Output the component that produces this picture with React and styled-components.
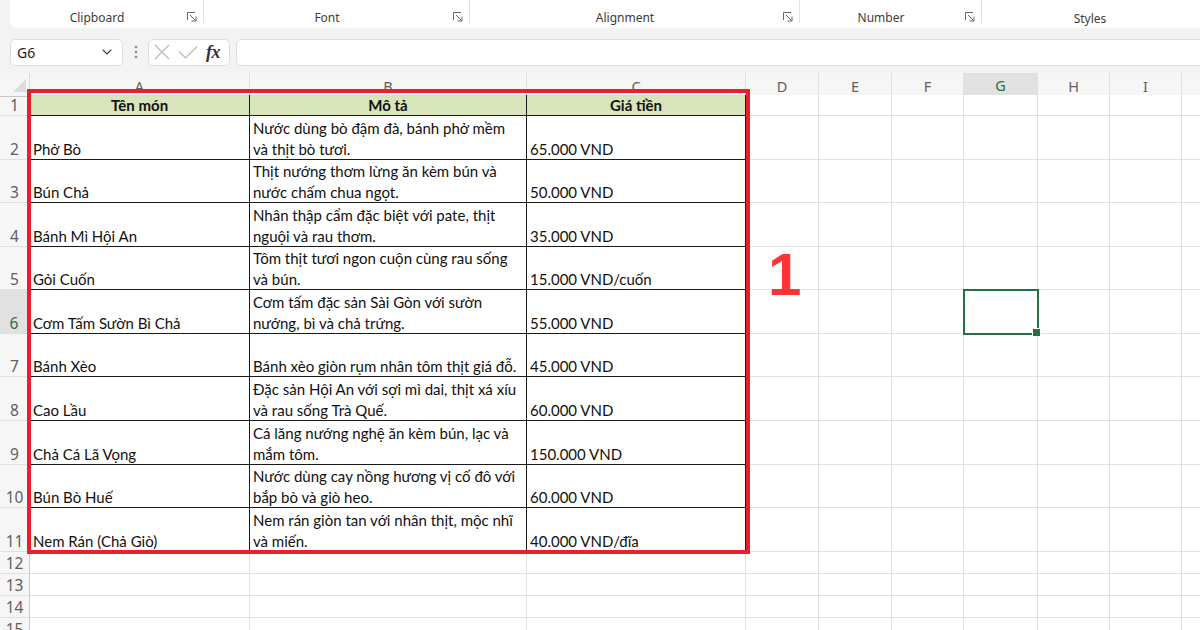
import styled, { createGlobalStyle } from "styled-components";
import { ChevronDown } from "lucide-react";

const GlobalStyle = createGlobalStyle`
  html, body {
    margin: 0;
    padding: 0;
    background: #f3f3f3;
    overflow: hidden;
  }
  * { box-sizing: border-box; }
`;

const COLUMNS = [
  ["A", 220],
  ["B", 277],
  ["C", 219],
  ["D", 73],
  ["E", 73],
  ["F", 72],
  ["G", 74],
  ["H", 72],
  ["I", 72],
  ["J", 80],
];

const TEMPLATE = "30px " + COLUMNS.map(([, w]) => w + "px").join(" ");

const DISHES = [
  ["Phở Bò", ["Nước dùng bò đậm đà, bánh phở mềm", "và thịt bò tươi."], "65.000 VND", 44],
  ["Bún Chả", ["Thịt nướng thơm lừng ăn kèm bún và", "nước chấm chua ngọt."], "50.000 VND", 43],
  ["Bánh Mì Hội An", ["Nhân thập cẩm đặc biệt với pate, thịt", "nguội và rau thơm."], "35.000 VND", 44],
  ["Gỏi Cuốn", ["Tôm thịt tươi ngon cuộn cùng rau sống", "và bún."], "15.000 VND/cuốn", 43],
  ["Cơm Tấm Sườn Bì Chả", ["Cơm tấm đặc sản Sài Gòn với sườn", "nướng, bì và chả trứng."], "55.000 VND", 44],
  ["Bánh Xèo", ["Bánh xèo giòn rụm nhân tôm thịt giá đỗ."], "45.000 VND", 43],
  ["Cao Lầu", ["Đặc sản Hội An với sợi mì dai, thịt xá xíu", "và rau sống Trà Quế."], "60.000 VND", 44],
  ["Chả Cá Lã Vọng", ["Cá lăng nướng nghệ ăn kèm bún, lạc và", "mắm tôm."], "150.000 VND", 44],
  ["Bún Bò Huế", ["Nước dùng cay nồng hương vị cố đô với", "bắp bò và giò heo."], "60.000 VND", 43],
  ["Nem Rán (Chả Giò)", ["Nem rán giòn tan với nhân thịt, mộc nhĩ", "và miến."], "40.000 VND/đĩa", 44],
];

const GROUPS = [
  ["Clipboard", 194, true],
  ["Font", 266, true],
  ["Alignment", 330, true],
  ["Number", 182, true],
  ["Styles", 216, false],
];

function Launcher() {
  return (
    <svg width="10" height="10" viewBox="0 0 10 10" fill="none" stroke="#666" strokeWidth="1">
      <path d="M0.5 8V0.5H8" />
      <path d="M3 3l5.5 5.5" />
      <path d="M9 4.5V9H4.5" />
    </svg>
  );
}

function Dots() {
  return (
    <svg width="4" height="14" viewBox="0 0 4 14" fill="#8a8a8a">
      <circle cx="2" cy="2" r="1.3" />
      <circle cx="2" cy="7" r="1.3" />
      <circle cx="2" cy="12" r="1.3" />
    </svg>
  );
}

function CancelIcon() {
  return (
    <svg width="16" height="16" viewBox="0 0 16 16" fill="none" stroke="#b9b9b9" strokeWidth="1.2">
      <path d="M1 1l14 14M15 1L1 15" />
    </svg>
  );
}

function EnterIcon() {
  return (
    <svg width="20" height="13" viewBox="0 0 20 13" fill="none" stroke="#b9b9b9" strokeWidth="1.2">
      <path d="M1 5.5l6.5 6.5L19 0.8" />
    </svg>
  );
}

export default function App() {
  const emptyCols = COLUMNS.slice(3);

  return (
    <>
      <GlobalStyle />
      <Styled.Page>
        <Styled.Ribbon>
          {GROUPS.map(([label, width, launcher]) => (
            <Styled.Group key={label} $w={width} $launcher={launcher}>
              <Styled.GroupLabel>{label}</Styled.GroupLabel>
              {launcher && (
                <Styled.LauncherSlot>
                  <Launcher />
                </Styled.LauncherSlot>
              )}
            </Styled.Group>
          ))}
        </Styled.Ribbon>

        <Styled.FormulaBar>
          <Styled.NameBox>
            <span>G6</span>
            <ChevronDown size={16} strokeWidth={1.6} color="#444" />
          </Styled.NameBox>
          <Styled.DotsSlot>
            <Dots />
          </Styled.DotsSlot>
          <Styled.ActionBox>
            <CancelIcon />
            <EnterIcon />
            <Styled.Fx>fx</Styled.Fx>
          </Styled.ActionBox>
          <Styled.FormulaInput />
        </Styled.FormulaBar>

        <Styled.Sheet>
          <Styled.Row $h={22}>
            <Styled.Corner>
              <Styled.CornerTriangle />
            </Styled.Corner>
            {COLUMNS.map(([letter]) => (
              <Styled.ColHeader key={letter} $active={letter === "G"}>
                {letter === "J" ? "" : letter}
              </Styled.ColHeader>
            ))}
          </Styled.Row>

          <Styled.Row $h={21}>
            <Styled.RowHeader>1</Styled.RowHeader>
            <Styled.Cell $table $head>Tên món</Styled.Cell>
            <Styled.Cell $table $head>Mô tả</Styled.Cell>
            <Styled.Cell $table $head>Giá tiền</Styled.Cell>
            {emptyCols.map(([c]) => (
              <Styled.Cell key={c} />
            ))}
          </Styled.Row>

          {DISHES.map(([name, desc, price, h], i) => {
            const rowNo = i + 2;
            return (
              <Styled.Row key={name} $h={h}>
                <Styled.RowHeader $active={rowNo === 6}>{rowNo}</Styled.RowHeader>
                <Styled.Cell $table>
                  <Styled.Line>{name}</Styled.Line>
                </Styled.Cell>
                <Styled.Cell $table>
                  {desc.map((line) => (
                    <Styled.Line key={line}>{line}</Styled.Line>
                  ))}
                </Styled.Cell>
                <Styled.Cell $table>
                  <Styled.Line>{price}</Styled.Line>
                </Styled.Cell>
                {emptyCols.map(([c]) => (
                  <Styled.Cell key={c} $selected={rowNo === 6 && c === "G"} />
                ))}
              </Styled.Row>
            );
          })}

          {[12, 13, 14, 15].map((n) => (
            <Styled.Row key={n} $h={22}>
              <Styled.RowHeader>{n}</Styled.RowHeader>
              {COLUMNS.map(([c]) => (
                <Styled.Cell key={c} />
              ))}
            </Styled.Row>
          ))}

          <Styled.Highlight />
          <Styled.Marker>1</Styled.Marker>
        </Styled.Sheet>
      </Styled.Page>
    </>
  );
}

const Styled = {
  Page: styled.div`
    width: 1200px;
    height: 630px;
    overflow: hidden;
    background: #f3f3f3;
    font-family: "Noto Sans", "Open Sans", sans-serif;
  `,

  Ribbon: styled.div`
    display: flex;
    height: 28px;
    margin-left: 10px;
    width: 1210px;
    background: #ffffff;
    border-radius: 0 0 8px 8px;
  `,

  Group: styled.div`
    position: relative;
    display: flex;
    align-items: flex-end;
    justify-content: center;
    width: ${({ $w }) => $w}px;
    height: 28px;
    padding-right: ${({ $launcher }) => ($launcher ? 20 : 0)}px;
    padding-bottom: ${({ $launcher }) => ($launcher ? 2 : 1)}px;
    background: linear-gradient(#e3e3e3, #e3e3e3) right top / 1px 23px no-repeat;

    &:last-child {
      background: none;
    }
  `,

  GroupLabel: styled.span`
    font-size: 12px;
    color: #3c3c3c;
    line-height: 16px;
  `,

  LauncherSlot: styled.span`
    position: absolute;
    right: 7px;
    bottom: 6px;
    display: flex;
  `,

  FormulaBar: styled.div`
    display: flex;
    align-items: center;
    height: 28px;
    margin-top: 10px;
    padding-left: 10px;
  `,

  NameBox: styled.div`
    display: flex;
    align-items: center;
    justify-content: space-between;
    width: 113px;
    height: 27px;
    padding: 0 7px 0 6px;
    background: #ffffff;
    border: 1px solid #dedede;
    border-radius: 5px;
    font-size: 14px;
    color: #222;
  `,

  DotsSlot: styled.div`
    display: flex;
    width: 25px;
    justify-content: center;
  `,

  ActionBox: styled.div`
    display: flex;
    align-items: center;
    gap: 8px;
    width: 82px;
    height: 27px;
    padding: 0 0 0 5px;
    background: #ffffff;
    border: 1px solid #dedede;
    border-radius: 5px;
  `,

  Fx: styled.span`
    font-family: "Liberation Serif", "DejaVu Serif", serif;
    font-style: italic;
    font-weight: bold;
    font-size: 18px;
    color: #333;
    letter-spacing: -0.5px;
  `,

  FormulaInput: styled.div`
    flex: 1;
    height: 27px;
    margin-left: 6px;
    margin-right: -20px;
    background: #ffffff;
    border: 1px solid #dedede;
    border-radius: 5px;
  `,

  Sheet: styled.div`
    position: relative;
    margin-top: 7px;
    background: #ffffff;
  `,

  Row: styled.div`
    display: grid;
    grid-template-columns: ${TEMPLATE};
    height: ${({ $h }) => $h}px;
  `,

  Corner: styled.div`
    position: relative;
    background: #f6f6f6;
    border-right: 1px solid #dadada;
    border-bottom: 1px solid #c8c8c8;
  `,

  CornerTriangle: styled.div`
    position: absolute;
    right: 3px;
    bottom: 4px;
    width: 0;
    height: 0;
    border-left: 13px solid transparent;
    border-bottom: 13px solid #dcdcdc;
  `,

  ColHeader: styled.div`
    display: flex;
    align-items: center;
    justify-content: center;
    padding-top: 2px;
    font-size: 14.5px;
    color: ${({ $active }) => ($active ? "#217346" : "#5f5f5f")};
    background: ${({ $active }) => ($active ? "#e1e1e1" : "#f6f6f6")};
    border-right: 1px solid #e0e0e0;
    border-bottom: ${({ $active }) => ($active ? "2px solid #217346" : "1px solid #c8c8c8")};
  `,

  RowHeader: styled.div`
    display: flex;
    align-items: flex-end;
    justify-content: center;
    padding-bottom: 0;
    font-size: 15.5px;
    line-height: 20px;
    color: ${({ $active }) => ($active ? "#217346" : "#5f5f5f")};
    background: ${({ $active }) => ($active ? "#e1e1e1" : "#f6f6f6")};
    border-right: ${({ $active }) => ($active ? "2px solid #217346" : "1px solid #c8c8c8")};
    border-bottom: 1px solid #e0e0e0;
  `,

  Cell: styled.div`
    position: relative;
    display: flex;
    flex-direction: column;
    justify-content: ${({ $head }) => ($head ? "center" : "flex-end")};
    align-items: ${({ $head }) => ($head ? "center" : "flex-start")};
    padding: 0 3px;
    font-family: "Lato", "Noto Sans", sans-serif;
    font-size: 15px;
    font-weight: ${({ $head }) => ($head ? 700 : 400)};
    color: #111;
    background: ${({ $head }) => ($head ? "#d8e4bc" : "#ffffff")};
    border-right: 1px solid ${({ $table }) => ($table ? "#1a1a1a" : "#e1e1e1")};
    border-bottom: 1px solid ${({ $table }) => ($table ? "#1a1a1a" : "#e1e1e1")};
    outline: ${({ $selected }) => ($selected ? "2px solid #217346" : "none")};
    outline-offset: -1px;
    z-index: ${({ $selected }) => ($selected ? 1 : "auto")};

    &::after {
      content: "";
      display: ${({ $selected }) => ($selected ? "block" : "none")};
      position: absolute;
      right: -4px;
      bottom: -4px;
      width: 7px;
      height: 7px;
      background: #217346;
      border: 1px solid #ffffff;
    }
  `,

  Line: styled.div`
    max-width: 100%;
    overflow: hidden;
    white-space: nowrap;
    line-height: 21.7px;

    &:last-child {
      margin-bottom: -2px;
    }
  `,

  Highlight: styled.div`
    position: absolute;
    left: 27px;
    top: 16px;
    width: 723px;
    height: 465px;
    border: 4px solid #ea1f2b;
    pointer-events: none;
    z-index: 2;
  `,

  Marker: styled.div`
    position: absolute;
    left: 768px;
    top: 172px;
    font-family: "Liberation Sans", Arial, sans-serif;
    font-weight: 700;
    font-size: 60px;
    line-height: 1;
    color: #ff3333;
  `,
};
